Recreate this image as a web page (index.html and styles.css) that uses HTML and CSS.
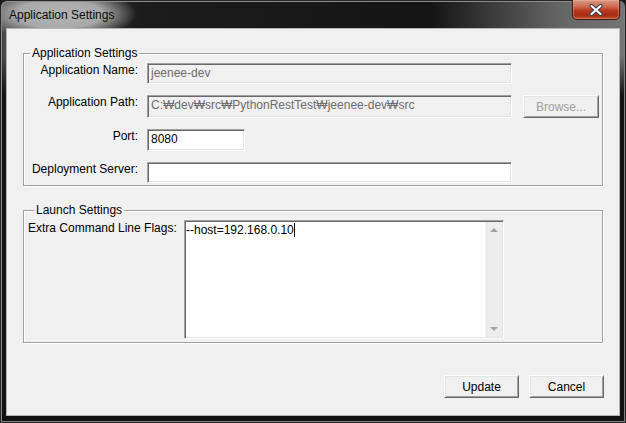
FILE: index.html
```html
<!DOCTYPE html>
<html lang="en">
<head>
<meta charset="utf-8">
<title>Application Settings</title>
<link rel="stylesheet" href="styles.css">
</head>
<body>
<div class="window">
  <div class="titlebar">
    <span class="title">Application Settings</span>
    <button class="close" type="button" aria-label="Close">
      <svg width="14" height="12" viewBox="0 0 14 12">
        <path d="M2.5 2 L11.5 10 M11.5 2 L2.5 10" stroke="#3c4150" stroke-width="4.2" stroke-linecap="round" fill="none"/>
        <path d="M2.5 2 L11.5 10 M11.5 2 L2.5 10" stroke="#ffffff" stroke-width="2" stroke-linecap="round" fill="none"/>
      </svg>
    </button>
  </div>
  <div class="client">
    <fieldset class="group group-app">
      <legend>Application Settings</legend>
      <div class="form-grid">
        <label class="lbl">Application Name:</label>
        <div class="field disabled wide">jeenee-dev</div>
        <span></span>

        <label class="lbl">Application Path:</label>
        <div class="field disabled wide">C:₩dev₩src₩PythonRestTest₩jeenee-dev₩src</div>
        <button class="btn btn-browse" type="button" disabled>Browse...</button>

        <label class="lbl">Port:</label>
        <div class="field port">8080</div>
        <span></span>

        <label class="lbl">Deployment Server:</label>
        <div class="field wide"></div>
        <span></span>
      </div>
    </fieldset>

    <fieldset class="group group-launch">
      <legend>Launch Settings</legend>
      <div class="launch-row">
        <label class="flags-label">Extra Command Line Flags:</label>
        <div class="memo">
          <div class="memo-text"><span class="caret">--host=192.168.0.10</span></div>
          <div class="vscroll">
            <span class="arrow-up"></span>
            <span class="arrow-down"></span>
          </div>
        </div>
      </div>
    </fieldset>

    <div class="actions">
      <button class="btn" type="button">Update</button>
      <button class="btn" type="button">Cancel</button>
    </div>
  </div>
</div>
</body>
</html>
```

FILE: styles.css
```css
* { box-sizing: border-box; }

html, body {
  margin: 0;
  padding: 0;
  width: 626px;
  height: 423px;
  overflow: hidden;
  background: #1a1a1a;
}

body {
  font-family: "Liberation Sans", Arial, sans-serif;
  font-size: 12px;
  line-height: 14px;
  color: #000;
}

.window {
  width: 626px;
  height: 423px;
  display: flex;
  flex-direction: column;
  padding: 0 5px 6px 5px;
  border: 1px solid #262626;
  border-radius: 7px 7px 0 0;
  box-shadow: inset 1px 1px 0 #8c8c8c, inset -1px -1px 0 #7c7c7c;
  background:
    radial-gradient(ellipse 78px 26px at 58px 13px, #b4b4b4 0%, #a9a9a9 55%, rgba(150,150,150,0) 100%),
    linear-gradient(to bottom, rgba(18,18,18,0) 0, rgba(18,18,18,0) 55px, #121212 95px),
    linear-gradient(to right, #4a4a4a 0, #1c1c1c 140px, #151515 430px, #666 560px, #747474 100%);
}

.titlebar {
  height: 27px;
  display: flex;
  align-items: flex-start;
  margin: 0 -4px;
  padding-left: 7px;
}

.title {
  margin-top: 7px;
  color: #0a0a0a;
  font-size: 12px;
  letter-spacing: 0;
}

.close {
  margin-left: auto;
  margin-top: -1px;
  margin-right: 4px;
  width: 48px;
  height: 20px;
  padding: 0;
  border: 1px solid #3b1a12;
  border-top: none;
  border-radius: 0 0 5px 5px;
  display: flex;
  align-items: center;
  justify-content: center;
  background: linear-gradient(to bottom, #d99a86 0, #cf6a4f 35%, #b8391c 55%, #a82d12 80%, #c2502f 100%);
  box-shadow: inset 0 0 0 1px rgba(255,200,180,0.35);
}

.client {
  flex: 1;
  border: 1px solid #b5b5b5;
  background: #f0f0f0;
  padding: 17px 16px 14px 16px;
  display: flex;
  flex-direction: column;
}

.group {
  margin: 0;
  min-width: 0;
  width: 580px;
  border: 1px solid #a0a0a0;
  box-shadow: inset 1px 1px 0 #fff, 1px 1px 0 #fff;
  padding: 0;
}

.group legend {
  margin-left: 6px;
  padding: 0 2px;
  line-height: 14px;
}

.group-app { padding: 3px 0 2px 0; }

.form-grid {
  display: grid;
  grid-template-columns: 114px 365px auto;
  grid-template-rows: 21px 23px 22px 21px;
  column-gap: 9px;
  row-gap: 11px;
  align-items: stretch;
}

.lbl {
  text-align: right;
  white-space: nowrap;
}

.field {
  height: 100%;
  background: #fff;
  border-top: 1px solid #a0a0a0;
  border-left: 1px solid #a0a0a0;
  border-bottom: 1px solid #fff;
  border-right: 1px solid #fff;
  box-shadow: inset 1px 1px 0 #696969, inset -1px -1px 0 #e3e3e3;
  padding: 0 3px;
  line-height: 18px;
  white-space: nowrap;
  overflow: hidden;
}

.field.disabled {
  background: #f0f0f0;
  color: #6d6d6d;
}

.field.wide { width: 365px; }
.field.port { width: 98px; }

.btn {
  font-family: "Liberation Sans", Arial, sans-serif;
  font-size: 12px;
  line-height: 14px;
  color: #000;
  width: 75px;
  height: 23px;
  padding: 0;
  background: #f0f0f0;
  border-top: 1px solid #fff;
  border-left: 1px solid #fff;
  border-right: 1px solid #696969;
  border-bottom: 1px solid #696969;
  box-shadow: inset 1px 1px 0 #e3e3e3, inset -1px -1px 0 #a0a0a0;
}

.btn-browse {
  width: 76px;
  margin-left: 2px;
  color: #a0a0a0;
}

.group-launch {
  margin-top: 17px;
  padding: 3px 0 3px 4px;
}

.launch-row {
  display: flex;
  align-items: flex-start;
}

.flags-label {
  width: 156px;
  margin-top: 1px;
  white-space: nowrap;
}

.memo {
  width: 320px;
  height: 119px;
  display: flex;
  background: #fff;
  border-top: 1px solid #a0a0a0;
  border-left: 1px solid #a0a0a0;
  border-bottom: 1px solid #fff;
  border-right: 1px solid #fff;
  box-shadow: inset 1px 1px 0 #696969, inset -1px -1px 0 #e3e3e3;
  padding: 1px 1px 1px 1px;
}

.memo-text {
  flex: 1;
  padding-top: 1px;
  white-space: nowrap;
}

.caret {
  border-right: 1px solid #000;
  padding-right: 0;
}

.vscroll {
  width: 17px;
  background: #ededed;
  border-left: 1px solid #f6f6f6;
  box-shadow: inset 1px 0 0 #e4e4e4;
  display: flex;
  flex-direction: column;
  align-items: center;
  justify-content: space-between;
  padding: 6px 0 6px 0;
}

.arrow-up, .arrow-down {
  width: 0;
  height: 0;
  border-left: 4px solid transparent;
  border-right: 4px solid transparent;
}

.arrow-up { border-bottom: 4px solid #a3a3a3; }
.arrow-down { border-top: 4px solid #a3a3a3; }

.actions {
  margin-top: 32px;
  margin-right: -1px;
  display: flex;
  justify-content: flex-end;
  gap: 10px;
}
```
